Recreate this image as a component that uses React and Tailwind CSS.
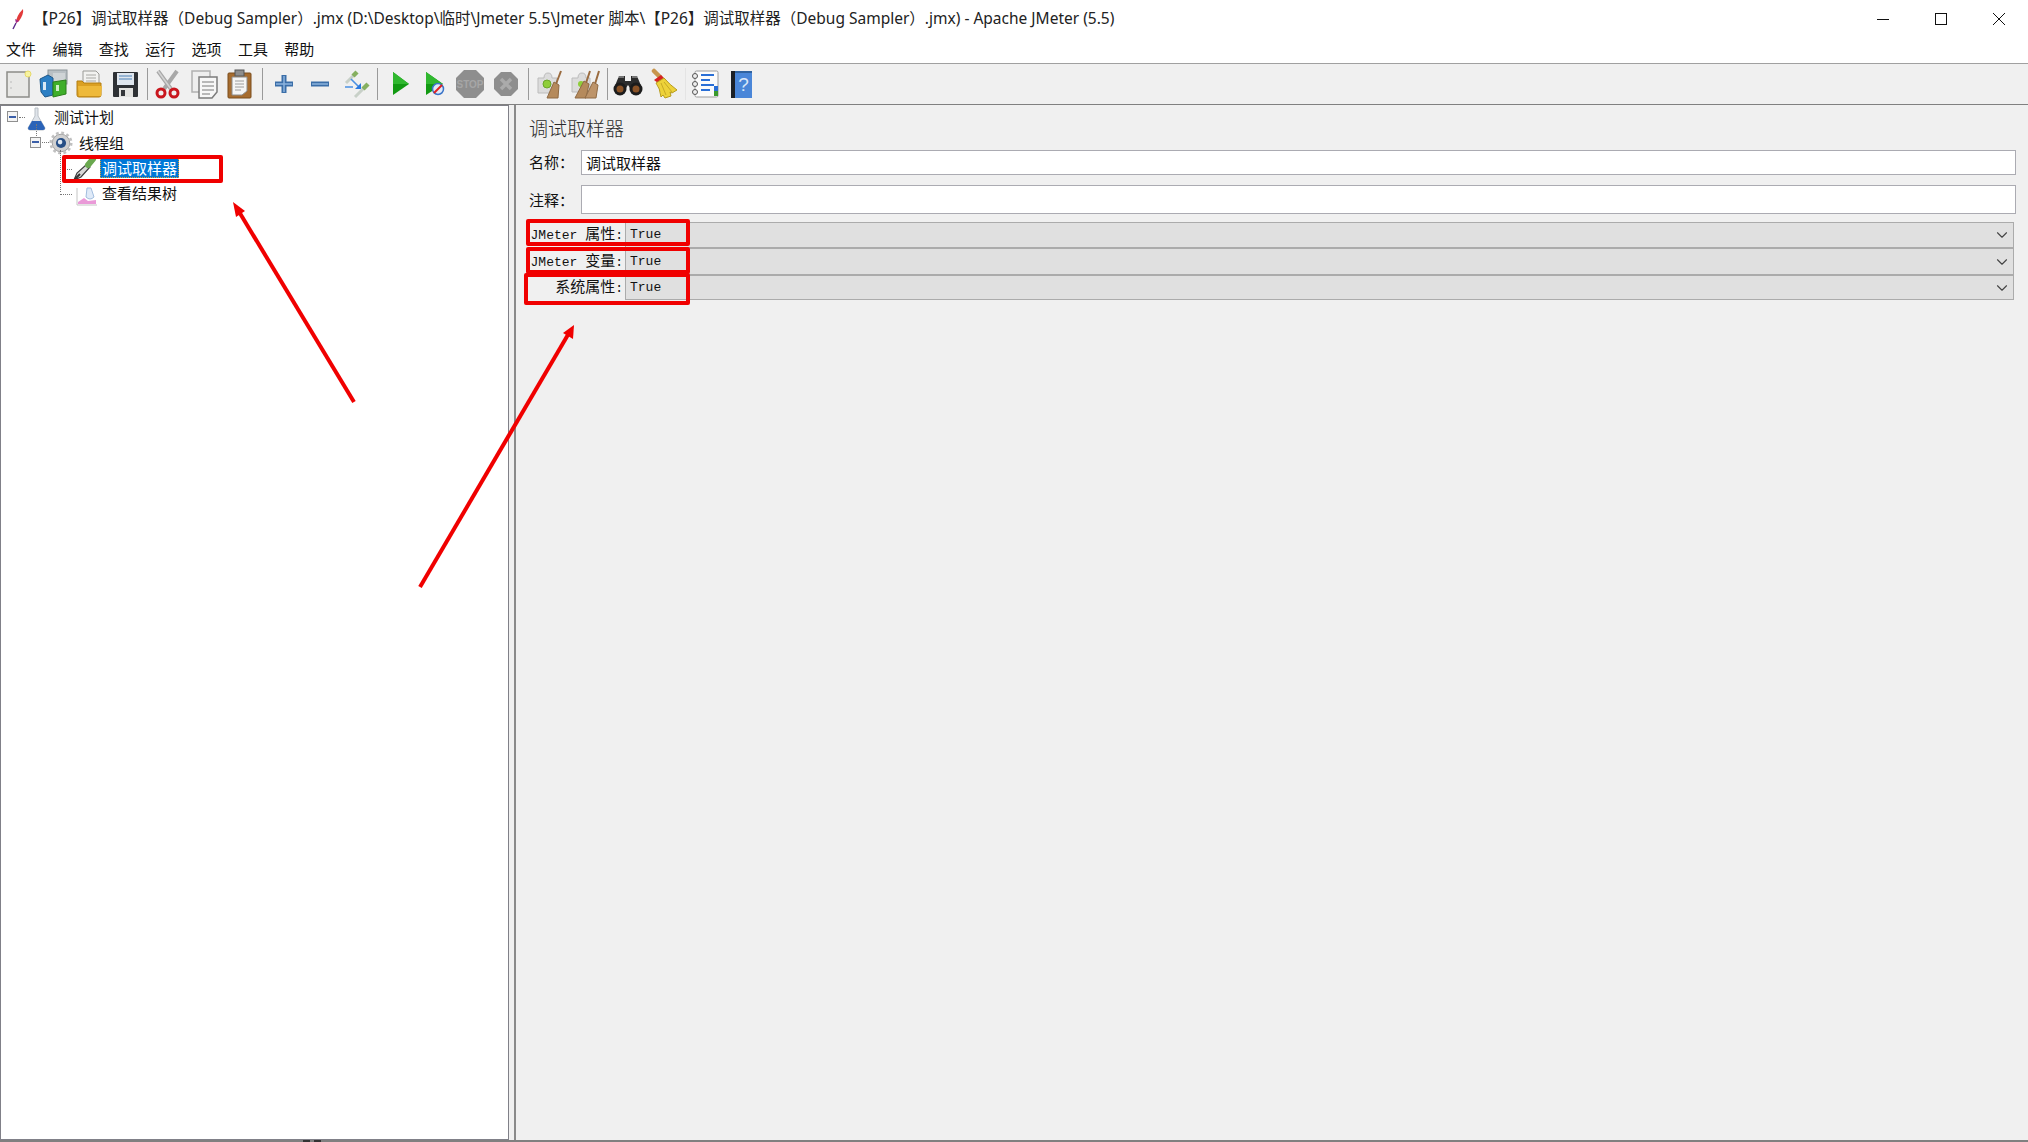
import { ChevronDown } from "lucide-react";

const cjk = '"Noto Sans CJK SC", "Noto Sans", sans-serif';

function Svg({ children }) {
  return (
    <svg width="32" height="32" viewBox="0 0 32 32" className="block">
      {children}
    </svg>
  );
}

const NewFile = () => (
  <Svg>
    <rect x="5" y="4" width="22" height="25" fill="#e8e8e6" stroke="#8c8c88" strokeWidth="1.5" />
    <circle cx="9" cy="14" r="0.7" fill="#aaa" />
    <circle cx="9" cy="20" r="0.7" fill="#aaa" />
    <circle cx="26" cy="6" r="3" fill="#f7f3a0" stroke="#e6d96a" />
  </Svg>
);

const Templates = () => (
  <Svg>
    <rect x="10" y="2" width="19" height="14" fill="#b9c0c4" stroke="#8b9498" />
    <rect x="15" y="5" width="12" height="10" fill="#cfd4d6" />
    <path d="M2 11 L10 7 L15 10 L15 27 L7 29 L3 24 Z" fill="#2c7fc4" stroke="#1d5688" />
    <rect x="5" y="14" width="3" height="8" fill="#d8e8f4" />
    <path d="M15 14 L28 12 L28 26 L15 29 Z" fill="#3fae2a" stroke="#2b7f1b" />
    <rect x="18" y="17" width="3" height="6" fill="#cfeec8" />
  </Svg>
);

const OpenFolder = () => (
  <Svg>
    <path d="M9 3 H22 L25 6 V18 H9 Z" fill="#f2f2f0" stroke="#9a9a96" />
    <path d="M12 7 H22 M12 10 H22 M12 13 H22" stroke="#a8a8a4" />
    <path d="M3 13 H8 L10 15 H27 V27 Q27 29 25 29 H5 Q3 29 3 27 Z" fill="#dba022" stroke="#b47f12" />
    <path d="M4 18 H28 L27 28 H5 Z" fill="#eeb93a" />
  </Svg>
);

const Save = () => (
  <Svg>
    <rect x="3" y="4" width="25" height="25" rx="1" fill="#2e3135" />
    <rect x="7" y="5" width="17" height="12" fill="#dfe6ee" />
    <path d="M9 8 H22 M9 11 H22" stroke="#7ea2c9" strokeWidth="1.5" />
    <rect x="9" y="20" width="14" height="9" fill="#e2e2e0" />
    <rect x="11" y="22" width="4" height="6" fill="#33363a" />
  </Svg>
);

const Cut = () => (
  <Svg>
    <path d="M6 3 L19 21 M25 3 L12 21" stroke="#a8a8a8" strokeWidth="4" />
    <path d="M6 3 L19 21" stroke="#d4d4d4" strokeWidth="1.5" />
    <circle cx="9" cy="25" r="4" fill="none" stroke="#c9171e" strokeWidth="3" />
    <circle cx="22" cy="25" r="4" fill="none" stroke="#c9171e" strokeWidth="3" />
  </Svg>
);

const Copy = () => (
  <Svg>
    <rect x="4" y="3" width="18" height="21" fill="#eeeeee" stroke="#b0b0b0" strokeWidth="1.5" />
    <path d="M11 9 H29 V24 L24 30 H11 Z" fill="#f7f7f7" stroke="#7c7c7c" strokeWidth="1.5" />
    <path d="M14 14 H26 M14 18 H26 M14 22 H26 M14 26 H22" stroke="#a4a4a4" strokeWidth="1.5" />
  </Svg>
);

const Paste = () => (
  <Svg>
    <rect x="4" y="5" width="23" height="25" rx="1" fill="#a66c2f" stroke="#7a4c1c" />
    <rect x="11" y="2" width="9" height="6" fill="#8e8e8e" stroke="#555" />
    <path d="M8 9 H23 V23 L18 27 H8 Z" fill="#f5f5f5" stroke="#8c8c8c" />
    <path d="M11 13 H20 M11 16 H20 M11 19 H20 M11 22 H17" stroke="#9c9c9c" />
  </Svg>
);

const Plus = () => (
  <Svg>
    <path d="M7 16 H25 M16 7 V25" stroke="#3b6ea8" strokeWidth="5" />
    <path d="M8 16 H24 M16 8 V24" stroke="#8db4de" strokeWidth="1.5" />
  </Svg>
);

const MinusIcon = () => (
  <Svg>
    <path d="M7 16 H25" stroke="#3b6ea8" strokeWidth="5" />
    <path d="M8 16 H24" stroke="#8db4de" strokeWidth="1.5" />
  </Svg>
);

const Toggle = () => (
  <Svg>
    <path d="M6 15 L14 7" stroke="#c8d0c8" strokeWidth="3" />
    <path d="M13 8 L17 4" stroke="#86b060" strokeWidth="4.5" />
    <path d="M15 29 L24 20" stroke="#c8d0c8" strokeWidth="3" />
    <path d="M23 21 L28 16" stroke="#86b060" strokeWidth="4.5" />
    <path d="M5 19 H13 M11 11 L20 20" stroke="#4a90e2" strokeWidth="1.6" />
    <path d="M21 15 V21 H15 Z" fill="#2a7ae0" />
  </Svg>
);

const Start = () => (
  <Svg>
    <path d="M11 4 L27 16 L11 27 Z" fill="#129a12" />
    <path d="M11 4 L27 16 H11 Z" fill="#30b82f" />
  </Svg>
);

const StartNoPause = () => (
  <Svg>
    <path d="M8 4 L25 16 L8 27 Z" fill="#129a12" />
    <path d="M8 4 L25 16 H8 Z" fill="#30b82f" />
    <circle cx="20" cy="21" r="5.5" fill="#dfe9f8" stroke="#3a74c8" strokeWidth="1.5" />
    <path d="M16 25 L24 17" stroke="#e02020" strokeWidth="2" />
  </Svg>
);

const Stop = () => (
  <Svg>
    <path d="M10 2 H22 L30 10 V22 L22 30 H10 L2 22 V10 Z" fill="#8e8e8e" />
    <text x="16" y="20" textAnchor="middle" fontSize="10" fontWeight="700" fontFamily='"Liberation Sans", sans-serif' fill="#a6a6a6">
      STOP
    </text>
  </Svg>
);

const Shutdown = () => (
  <Svg>
    <path d="M11 4 H21 L28 11 V21 L21 28 H11 L4 21 V11 Z" fill="#8e8e8e" />
    <path d="M11 11 L21 21 M21 11 L11 21" stroke="#ababab" strokeWidth="3.5" />
  </Svg>
);

const Clear = () => (
  <Svg>
    <path d="M4 10 H10 Q10 5 14 5 Q18 5 18 10 H23 V25 H4 Z" fill="#dcdcdc" stroke="#bcbcbc" />
    <circle cx="13" cy="16" r="4" fill="#8fce3a" stroke="#6ba82a" />
    <path d="M27 3 L22 16" stroke="#9a6b3f" strokeWidth="2" />
    <path d="M20 14 L25 17 L24 30 L13 30 Z" fill="#b58a5c" stroke="#8f6a44" />
  </Svg>
);

const ClearAll = () => (
  <Svg>
    <path d="M2 10 H8 Q8 5 12 5 Q16 5 16 10 H20 V24 H2 Z" fill="#dcdcdc" stroke="#bcbcbc" />
    <circle cx="11" cy="16" r="3" fill="#8fce3a" />
    <path d="M20 3 L16 15 M29 3 L25 16" stroke="#9a6b3f" strokeWidth="2" />
    <path d="M14 13 L19 16 L16 30 L5 30 Z" fill="#b58a5c" stroke="#8f6a44" />
    <path d="M23 14 L28 17 L26 30 L15 30 Z" fill="#bd946a" stroke="#8f6a44" />
  </Svg>
);

const Binoculars = () => (
  <Svg>
    <path d="M7 8 H13 V13 H19 V8 H25 L30 20 H18 L16 17 L14 20 H2 Z" fill="#2c2c2c" />
    <circle cx="8" cy="21" r="6.5" fill="#1c1c1c" />
    <circle cx="24" cy="21" r="6.5" fill="#1c1c1c" />
    <circle cx="8" cy="21" r="3.5" fill="#8a5226" />
    <circle cx="24" cy="21" r="3.5" fill="#8a5226" />
    <path d="M6 9 H12 M20 9 H26" stroke="#bdbdbd" />
  </Svg>
);

const Broom = () => (
  <Svg>
    <path d="M6 3 L12 9" stroke="#c8964e" strokeWidth="4.5" strokeLinecap="round" />
    <path d="M6 12 L13 7 L16 10 L10 15 Z" fill="#d62222" />
    <path d="M8 15 L16 10 Q22 17 29 22 L24 25 L22 24 L23 28 L17 30 L15 27 L13 29 Q12 20 8 15 Z" fill="#edd239" stroke="#b79c1e" />
    <path d="M13 15 L18 27 M16 14 L24 24" stroke="#c7aa26" />
  </Svg>
);

const ListIcon = () => (
  <Svg>
    <rect x="5" y="3" width="23" height="26" rx="1.5" fill="#fbfbfb" stroke="#9c9c9c" />
    <circle cx="5" cy="8" r="2.5" fill="#eee" stroke="#555" />
    <circle cx="5" cy="16" r="2.5" fill="#eee" stroke="#555" />
    <circle cx="5" cy="24" r="2.5" fill="#eee" stroke="#555" />
    <path d="M11 7 H24 M11 12 H20 M11 17 H24 M11 22 H20" stroke="#2a6fd6" strokeWidth="2" />
    <rect x="24" y="18" width="4" height="5" fill="#2a6fd6" />
    <rect x="24" y="23" width="4" height="5" fill="#3b9a2c" />
  </Svg>
);

const Help = () => (
  <Svg>
    <rect x="5" y="3" width="6" height="27" fill="#1c2026" />
    <rect x="9" y="3" width="17" height="27" fill="#4a86d8" />
    <rect x="9" y="3" width="17" height="2" fill="#30629f" />
    <text x="17.5" y="23" textAnchor="middle" fontSize="19" fontFamily='"Liberation Sans", sans-serif' fill="#dbe8f8">
      ?
    </text>
  </Svg>
);

const Feather = () => (
  <svg width="16" height="22" viewBox="0 0 16 22" className="block">
    <path d="M13 1 Q14 6 9 13 L6 15 Q6 8 13 1 Z" fill="#e23a3a" />
    <path d="M9 13 L6 15 L5 11 Z" fill="#a02a8a" />
    <path d="M6 15 L3 21" stroke="#5b2a8a" strokeWidth="1.4" />
  </svg>
);

const Flask = () => (
  <svg width="24" height="24" viewBox="0 0 24 24" className="block mt-[4px]">
    <path d="M10 1 H13 V9 L20 21 Q20 23 18 23 H5 Q3 23 3 21 L10 9 Z" fill="#dfe4ea" stroke="#b9bfc6" />
    <path d="M7 14 H16 L20 21 Q20 23 18 23 H5 Q3 23 3 21 Z" fill="#2a63b8" />
  </svg>
);

const Gear = () => (
  <svg width="24" height="24" viewBox="0 0 26 26" className="block mt-[2px]">
    <circle cx="13" cy="13" r="9.5" fill="#d0d0d0" stroke="#9a9a9a" strokeWidth="1" />
    <circle cx="13" cy="13" r="11" fill="none" stroke="#c0c0c0" strokeWidth="3" strokeDasharray="3 2.75" />
    <circle cx="13" cy="13" r="5.5" fill="#274f86" />
    <circle cx="12" cy="12" r="2.5" fill="#dfe8f2" />
  </svg>
);

const Dropper = () => (
  <svg width="26" height="26" viewBox="0 0 26 26" className="block mt-[2px]">
    <path d="M2 24 L5 17 L15 8 L18 11 L9 21 Z" fill="#d8d8d8" stroke="#3c3c3c" strokeWidth="1.2" />
    <path d="M3 23 L8 18" stroke="#333" strokeWidth="2" />
    <path d="M16 9 L21 3" stroke="#6aa84f" strokeWidth="6" strokeLinecap="round" />
  </svg>
);

const ChartIcon = () => (
  <svg width="26" height="26" viewBox="0 0 26 26" className="block mt-[4px]">
    <path d="M5 6 V23 H25" fill="none" stroke="#c4c4c4" />
    <path d="M6 22 V20 L12 16 L16 19 L24 18 V22 Z" fill="#ea9ad8" />
    <path d="M15 6 H19 L22 15 Q18 19 14 15 Z" fill="#dfeaf8" stroke="#a3bedf" />
  </svg>
);

const toolbarGroups = [
  { icons: [NewFile, Templates, OpenFolder, Save], sep: "w-[6px]" },
  { icons: [Cut, Copy, Paste], sep: "w-[8px]" },
  { icons: [Plus, MinusIcon, Toggle], sep: "w-[6px]" },
  { icons: [Start, StartNoPause, Stop, Shutdown], sep: "w-[8px]" },
  { icons: [Clear, ClearAll], sep: "w-[6px]" },
  { icons: [Binoculars, Broom], sep: "w-[6px]", faint: true },
  { icons: [ListIcon, Help] },
];

const menus = ["文件", "编辑", "查找", "运行", "选项", "工具", "帮助"];

const combos = [
  { latin: "JMeter ", han: "属性", h: "h-[26px]" },
  { latin: "JMeter ", han: "变量", h: "h-[27px]" },
  { latin: "", han: "系统属性", h: "h-[25px]" },
];

function Expander() {
  return (
    <div className="w-[11px] h-[11px] border border-[#8f8f8f] bg-[#f4f4f4] flex items-center justify-center shrink-0">
      <div className="w-[7px] h-[2px] bg-[#3a5ea8]" />
    </div>
  );
}

function Toolbar() {
  return (
    <div className="h-[40px] bg-[#f0f0f0] flex items-center border-b border-[#808080] box-content">
      {toolbarGroups.map((group, i) => (
        <div key={i} className="flex items-center">
          {group.icons.map((Icon, j) => (
            <div key={j} className="w-[36px] flex justify-center">
              <Icon />
            </div>
          ))}
          {group.sep && (
            <div className={`${group.sep} h-[32px] flex justify-center`}>
              <div className={group.faint ? "w-px h-full bg-[#e4e4e4]" : "w-px h-full bg-[#9a9a9a]"} />
            </div>
          )}
        </div>
      ))}
    </div>
  );
}

function Tree() {
  return (
    <div className="relative -mt-[2px] text-[15px] leading-none text-[#111]">
      {/* dotted connectors */}
      <div className="absolute left-[35px] top-[20px] h-[12px] border-l border-dotted border-[#777]" />
      <div className="absolute left-[59px] top-[46px] h-[42px] border-l border-dotted border-[#777]" />
      <div className="absolute left-[59px] top-[90px] w-[12px] border-t border-dotted border-[#777]" />
      <div className="absolute left-[62px] top-[65px] w-[9px] border-t border-dotted border-[#777]" />

      <div className="h-[25px] flex items-center pl-[6px]">
        <Expander />
        <div className="w-[6px] ml-[1px] mt-[2px] border-t border-dotted border-[#777]" />
        <Flask />
        <span className="ml-[5px]">测试计划</span>
      </div>
      <div className="h-[26px] flex items-center pl-[29px]">
        <Expander />
        <div className="w-[7px] ml-[1px] border-t border-dotted border-[#777]" />
        <Gear />
        <span className="ml-[6px]">线程组</span>
      </div>
      <div className="h-[25px] flex items-center pl-[71px]">
        <Dropper />
        <span className="ml-[2px] h-[21px] px-[2px] flex items-center bg-[#0078d7] text-white outline-1 outline-dotted outline-[#e0a030] -outline-offset-1">
          调试取样器
        </span>
      </div>
      <div className="h-[25px] flex items-center pl-[71px]">
        <ChartIcon />
        <span className="ml-[4px]">查看结果树</span>
      </div>
    </div>
  );
}

function Form() {
  return (
    <div className="flex-1 bg-[#f0f0f0] border-l-2 border-[#8a8a8a] pl-[13px] pr-[12px]">
      <div className="h-[45px] pt-[11px] text-[19px] leading-[24px] font-light text-[#2a2a2a]">调试取样器</div>
      <div className="flex items-center h-[25px] text-[15px] text-[#111]">
        <span className="w-[52px] -mt-[1px]">名称：</span>
        <div className="flex-1 h-full border-[1.5px] border-[#ababb2] bg-white px-[4px] flex items-center leading-none">调试取样器</div>
      </div>
      <div className="flex items-center h-[29px] mt-[10px] text-[15px] text-[#111]">
        <span className="w-[52px] mt-[1px]">注释：</span>
        <div className="flex-1 h-full border-[1.5px] border-[#ababb2] bg-white" />
      </div>
      <div className="mt-[8px] mr-[2px] flex flex-col">
        {combos.map((c) => (
          <div key={c.han} className={`flex items-center ${c.h}`}>
            <span
              className="w-[96px] -mt-[2px] text-right pr-[2px] whitespace-pre text-[13px] text-[#111]"
              style={{ fontFamily: '"Liberation Mono", "Noto Sans CJK SC", monospace' }}
            >
              {c.latin}
              <span className="text-[15px]" style={{ fontFamily: cjk }}>{c.han}</span>:
            </span>
            <div className="flex-1 h-full border-[1.5px] border-[#ababab] bg-[#e0e0e0] flex items-center justify-between pl-[4px] pr-[2px]">
              <span
                className="text-[13px] text-[#111]"
                style={{ fontFamily: '"Liberation Mono", monospace' }}
              >
                True
              </span>
              <ChevronDown size={18} strokeWidth={1.5} className="text-[#444]" />
            </div>
          </div>
        ))}
      </div>
    </div>
  );
}

export default function App() {
  return (
    <div className="relative w-[2028px] h-[1142px] overflow-hidden bg-white flex flex-col" style={{ fontFamily: cjk }}>
      {/* title bar */}
      <div className="h-[38px] flex items-center bg-white pl-[10px]">
        <Feather />
        <span className="ml-[7px] text-[15.5px] text-[#222] whitespace-pre" style={{ fontFamily: '"Noto Sans", "Noto Sans CJK SC", sans-serif' }}>
          【P26】调试取样器（Debug Sampler）.jmx (D:\Desktop\临时\Jmeter 5.5\Jmeter 脚本\【P26】调试取样器（Debug Sampler）.jmx) - Apache JMeter (5.5)
        </span>
        <div className="ml-auto flex items-center">
          <div className="w-[58px] flex justify-center">
            <div className="w-[12px] h-px bg-[#111]" />
          </div>
          <div className="w-[58px] flex justify-center">
            <div className="w-[12px] h-[12px] border border-[#111]" />
          </div>
          <div className="w-[58px] flex justify-center">
            <svg width="12" height="12" viewBox="0 0 12 12">
              <path d="M0 0 L12 12 M12 0 L0 12" stroke="#111" strokeWidth="1" />
            </svg>
          </div>
        </div>
      </div>

      {/* menu bar */}
      <div className="h-[26px] flex items-center gap-[16.4px] pl-[6px] pb-[4px] text-[15px] text-[#111] border-b border-[#a0a0a0] box-border">
        {menus.map((m) => (
          <span key={m} className="w-[30px] leading-none">{m}</span>
        ))}
      </div>

      <Toolbar />

      {/* main split */}
      <div className="flex-1 flex bg-[#f0f0f0] min-h-0">
        <div className="w-[509px] bg-white border border-[#808088]">
          <Tree />
        </div>
        <div className="w-[5px]" />
        <Form />
      </div>

      {/* bottom edge */}
      <div className="h-[2px] bg-[#808080] flex pl-[303px] gap-[4px]">
        <div className="w-[7px] h-full bg-[#333]" />
        <div className="w-[7px] h-full bg-[#333]" />
      </div>

      {/* red annotations drawn over the screenshot */}
      <div className="absolute left-[62px] top-[155px] w-[161px] h-[28px] border-[4px] border-[#f00000] rounded-[2px]" />
      <div className="absolute left-[526px] top-[219px] w-[164px] h-[27px] border-[4px] border-[#f00000] rounded-[2px]" />
      <div className="absolute left-[526px] top-[247px] w-[164px] h-[27px] border-[4px] border-[#f00000] rounded-[2px]" />
      <div className="absolute left-[524px] top-[273px] w-[166px] h-[32px] border-[4px] border-[#f00000] rounded-[2px]" />
      <svg className="absolute left-0 top-0 pointer-events-none" width="2028" height="1142">
        <path d="M354 402 L238 210" stroke="#f00000" strokeWidth="4" />
        <path d="M233 202 L245 211 L236 217 Z" fill="#f00000" />
        <path d="M420 587 L569 333" stroke="#f00000" strokeWidth="4" />
        <path d="M574 325 L573 339 L563 333 Z" fill="#f00000" />
      </svg>
    </div>
  );
}
